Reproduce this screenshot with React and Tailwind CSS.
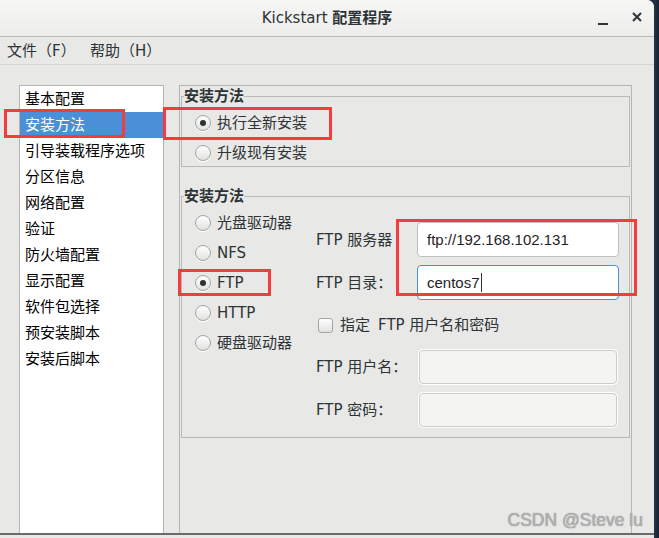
import React from 'react';

const NAV_ITEMS = [
  '基本配置',
  '安装方法',
  '引导装载程序选项',
  '分区信息',
  '网络配置',
  '验证',
  '防火墙配置',
  '显示配置',
  '软件包选择',
  '预安装脚本',
  '安装后脚本',
];

const SOURCES = [
  { label: '光盘驱动器' },
  { label: 'NFS' },
  { label: 'FTP', checked: true },
  { label: 'HTTP' },
  { label: '硬盘驱动器' },
];

function RadioDot({ checked }) {
  return (
    <span className="w-4 h-4 shrink-0 rounded-full border border-[#a3a5a3] bg-linear-to-b from-white to-[#e1e1df] flex items-center justify-center shadow-[0_1px_0_white]">
      {checked && <span className="w-[6px] h-[6px] rounded-full bg-[#2e3436]" />}
    </span>
  );
}

function Radio({ label, checked, rowClass }) {
  return (
    <div className={`flex items-center pl-[13px] ${rowClass}`}>
      <RadioDot checked={checked} />
      <span className="ml-[6px] text-[#2e3436]">{label}</span>
    </div>
  );
}

function TextField({ value, focused, disabled }) {
  if (disabled) {
    return (
      <div className="ml-[2px] w-[198px] h-[34px] rounded-[4px] border border-[#cbcdcb] bg-[#f4f4f2] ring-1 ring-white" />
    );
  }
  return (
    <div
      className={`w-[202px] h-[35px] rounded-[4px] border bg-white flex items-center pl-[9px] font-['Liberation_Sans',sans-serif] text-[15px] text-[#1f2325] ${
        focused ? 'border-[#4a90d9]' : 'border-[#bfc1bf]'
      }`}
    >
      {value}
      {focused && <span className="ml-[1px] w-px h-[19px] bg-[#2e3436]" />}
    </div>
  );
}

function FieldRow({ label, children, className = '' }) {
  return (
    <div className={`flex items-center ${className}`}>
      <span className="w-[101px] text-[#2e3436]">{label}</span>
      {children}
    </div>
  );
}

function RedBox({ className }) {
  return <div className={`absolute border-[3px] border-[#f53b3b] pointer-events-none ${className}`} />;
}

export default function App() {
  return (
    <div className="relative w-[659px] h-[538px] flex bg-[#1b2a3a] font-['DejaVu_Sans','Noto_Sans_CJK_SC',sans-serif] text-[15px] leading-[18px] overflow-hidden">
      {/* window */}
      <div className="w-[654px] h-full flex flex-col bg-[#e8e8e7] rounded-tr-[7px] overflow-hidden">
        {/* title bar */}
        <div className="relative h-[37px] shrink-0 flex items-center justify-center bg-linear-to-b from-[#f6f6f5] to-[#ededec] border-b border-[#b9b9b7] text-[#2e3436]">
          <span>
            Kickstart <span className="font-bold">配置程序</span>
          </span>
          <div className="absolute right-[12px] top-0 h-full flex items-center gap-[24px]">
            <svg width="10" height="10" viewBox="0 0 10 10" className="mt-[5px]">
              <rect x="0" y="7" width="10" height="2" fill="#2e3436" />
            </svg>
            <svg width="10" height="10" viewBox="0 0 10 10" className="-mt-[3px]">
              <path d="M1 1 L9 9 M9 1 L1 9" stroke="#2e3436" strokeWidth="2" />
            </svg>
          </div>
        </div>

        {/* menu bar */}
        <div className="h-[28px] shrink-0 flex items-center pl-[7px] border-b border-[#d4d4d2] text-[#2e3436]">
          <span className="w-[83px]">文件（F）</span>
          <span>帮助（H）</span>
        </div>

        {/* body */}
        <div className="h-[470px] shrink-0 flex pt-[20px] pl-[19px] border-b-2 border-[#6a6a6a] overflow-hidden">
          {/* section list */}
          <div className="w-[145px] shrink-0 bg-white border border-b-0 border-[#b5b5b3]">
            {NAV_ITEMS.map((item) => (
              <div
                key={item}
                className={`h-[26px] flex items-center pl-[5px] ${
                  item === '安装方法' ? 'bg-[#4a90d9] text-white' : 'text-black'
                }`}
              >
                {item}
              </div>
            ))}
          </div>

          {/* settings frame */}
          <div className="ml-[15px] w-[453px] shrink-0 border border-b-0 border-[#b5b5b3] pt-px px-px">
            <fieldset className="border border-[#b9b9b7] pb-px">
              <legend className="ml-[2px] font-bold text-[#2e3436] leading-[18px]">安装方法</legend>
              <div className="pt-[6px] flex flex-col gap-[6px]">
                <Radio label="执行全新安装" checked rowClass="h-[24px]" />
                <Radio label="升级现有安装" rowClass="h-[24px]" />
              </div>
            </fieldset>

            <fieldset className="mt-[20px] border border-[#b9b9b7]">
              <legend className="ml-[2px] font-bold text-[#2e3436] leading-[18px]">安装方法</legend>
              <div className="flex">
                <div className="w-[134px] shrink-0 pt-[3px] flex flex-col">
                  {SOURCES.map((s) => (
                    <Radio key={s.label} label={s.label} checked={s.checked} rowClass="h-[30px]" />
                  ))}
                </div>

                <div className="pt-[17px] pb-[10px] flex flex-col">
                  <FieldRow label="FTP 服务器">
                    <TextField value="ftp://192.168.102.131" />
                  </FieldRow>
                  <FieldRow label="FTP 目录：" className="mt-[8px]">
                    <TextField value="centos7" focused />
                  </FieldRow>
                  <div className="mt-[15px] h-[20px] flex items-center pl-[2px] text-[#2e3436]">
                    <span className="w-[15px] h-[15px] rounded-[3px] border border-[#a3a5a3] bg-linear-to-b from-white to-[#e1e1df]" />
                    <span className="ml-[7px]">指定</span>
                    <span className="ml-[8px]">FTP 用户名和密码</span>
                  </div>
                  <FieldRow label="FTP 用户名：" className="mt-[15px]">
                    <TextField disabled />
                  </FieldRow>
                  <FieldRow label="FTP 密码：" className="mt-[9px]">
                    <TextField disabled />
                  </FieldRow>
                </div>
              </div>
            </fieldset>
          </div>
        </div>
      </div>

      {/* dark desktop edge */}
      <div className="flex-1 bg-linear-to-r from-[#243447] to-[#142231]" />

      {/* annotations */}
      <RedBox className="left-[4px] top-[109px] w-[121px] h-[29px]" />
      <RedBox className="left-[163px] top-[107px] w-[169px] h-[33px]" />
      <RedBox className="left-[178px] top-[269px] w-[93px] h-[27px]" />
      <RedBox className="left-[396px] top-[219px] w-[241px] h-[77px]" />

      <div className="absolute right-[16px] top-[510px] font-['Liberation_Sans',sans-serif] text-[17.5px] leading-[20px] text-[#b4b4b4] [text-shadow:0_0_1px_#6f6f6f]">
        CSDN @Steve lu
      </div>
    </div>
  );
}
